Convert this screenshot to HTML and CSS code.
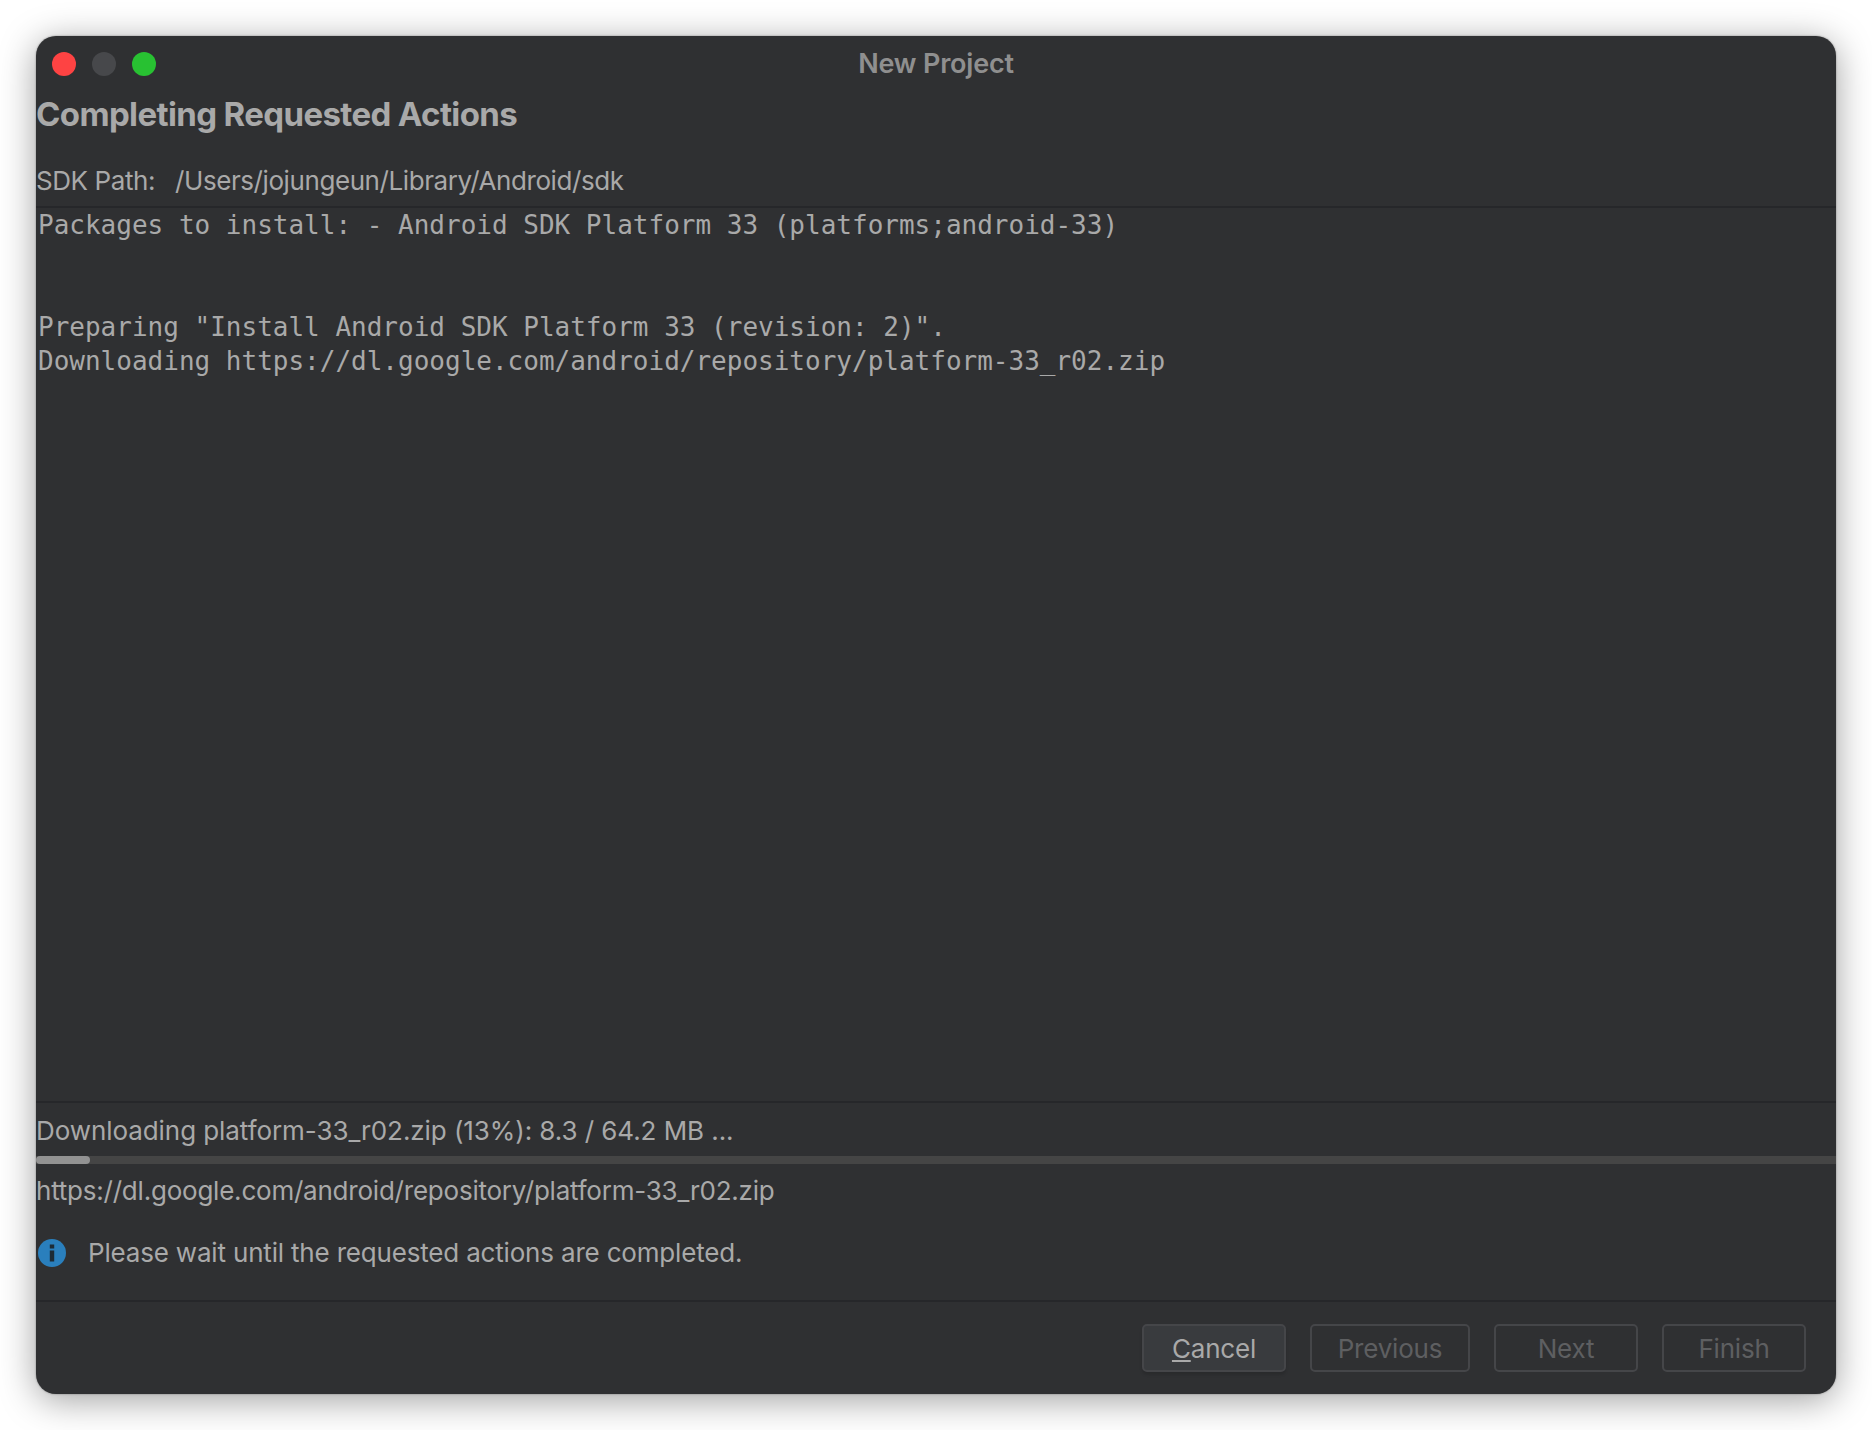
FILE: index.html
```html
<!DOCTYPE html>
<html lang="en">
<head>
<meta charset="utf-8">
<title>New Project</title>
<link rel="stylesheet" href="styles.css">
</head>
<body>
<main class="window">
  <header class="titlebar">
    <div class="lights">
      <span class="light light-close"></span>
      <span class="light light-min"></span>
      <span class="light light-max"></span>
    </div>
    <div class="title">New Project</div>
  </header>
  <h1 class="heading">Completing Requested Actions</h1>
  <div class="sdk"><span>SDK Path:</span><span>/Users/jojungeun/Library/Android/sdk</span></div>
  <pre class="log">Packages to install: - Android SDK Platform 33 (platforms;android-33)


Preparing "Install Android SDK Platform 33 (revision: 2)".
Downloading https://dl.google.com/android/repository/platform-33_r02.zip</pre>
  <section class="status">
    <div class="status-text">Downloading platform-33_r02.zip (13%): 8.3 / 64.2 MB ...</div>
    <div class="progress"><div class="progress-fill"></div></div>
    <div class="url">https://dl.google.com/android/repository/platform-33_r02.zip</div>
    <div class="notice">
      <svg class="info" viewBox="0 0 28 28" width="28" height="28" aria-hidden="true">
        <circle cx="14" cy="14" r="14" fill="#2a7fbd"/>
        <rect x="11.8" y="5.5" width="4.4" height="4" fill="#1d2b36"/>
        <rect x="11.8" y="11.5" width="4.4" height="11" fill="#1d2b36"/>
      </svg>
      <span>Please wait until the requested actions are completed.</span>
    </div>
  </section>
  <footer class="footer">
    <button class="btn btn-default" type="button"><u>C</u>ancel</button>
    <button class="btn btn-prev" type="button" disabled>Previous</button>
    <button class="btn" type="button" disabled>Next</button>
    <button class="btn" type="button" disabled>Finish</button>
  </footer>
</main>
</body>
</html>
```
FILE: styles.css
```css
* { box-sizing: border-box; }
html, body { margin: 0; background: #fff; }
body { padding: 36px; height: 1430px; overflow: hidden; font-family: Inter, "Liberation Sans", sans-serif; }
.window {
  width: 1800px; height: 1358px;
  background: #2f3032;
  border-radius: 20px;
  box-shadow: 0 6px 36px rgba(0,0,0,.38), 0 0 2px rgba(0,0,0,.4);
  display: flex; flex-direction: column;
  color: #a9a9a9;
  overflow: hidden;
}
.titlebar { height: 46px; flex: none; display: flex; align-items: center; position: relative; padding-left: 16px; }
.lights { display: flex; gap: 16px; margin-top: 9px; }
.light { width: 24px; height: 24px; border-radius: 50%; }
.light-close { background: #fe4343; }
.light-min { background: #47484b; }
.light-max { background: #28c132; }
.title { position: absolute; left: 0; right: 0; text-align: center; font-size: 27px; font-weight: 600; color: #8f8f8f; letter-spacing: -.2px; top: 11px; }
.heading { margin: 0; height: 54px; flex: none; padding-top: 6px; font-size: 33px; font-weight: 700; letter-spacing: -.62px; line-height: 52px; color: #a9a9a9; }
.sdk { flex: none; height: 70px; padding-top: 25px; display: flex; gap: 20px; font-size: 26px; line-height: 40px; letter-spacing: -.42px; }
.log {
  flex: 1; margin: 0; padding: 0 2px;
  border-top: 2px solid #26272a;
  border-bottom: 2px solid #26272a;
  font-family: "DejaVu Sans Mono", monospace;
  font-size: 26px; line-height: 34px;
  color: #a9a9a9;
}
.status { flex: none; height: 197px; display: flex; flex-direction: column; }
.status-text { height: 53px; flex: none; font-size: 26px; line-height: 56px; letter-spacing: -.07px; }
.progress { height: 8px; background: #454545; flex: none; }
.progress-fill { width: 54px; height: 8px; background: #929292; border-radius: 4px; }
.url { font-size: 26px; line-height: 40px; margin-top: 7px; letter-spacing: -.22px; }
.notice { display: flex; align-items: center; gap: 22px; margin-top: 22px; padding-left: 2px; font-size: 26px; line-height: 40px; letter-spacing: -.18px; }
.footer { flex: none; border-top: 2px solid #26272a; height: 94px; display: flex; justify-content: flex-end; gap: 24px; padding: 22px 30px 0 0; }
.btn {
  width: 144px; height: 48px;
  border: 2px solid #454649; border-radius: 5px;
  background: transparent; color: #5e5f61;
  font: 26px/46px Inter, "Liberation Sans", sans-serif;
  letter-spacing: -.2px; padding: 0;
}
.btn-prev { width: 160px; }
.btn-default { background: #393b3e; color: #a9a9a9; box-shadow: 0 3px 3px rgba(0,0,0,.12); }
```
